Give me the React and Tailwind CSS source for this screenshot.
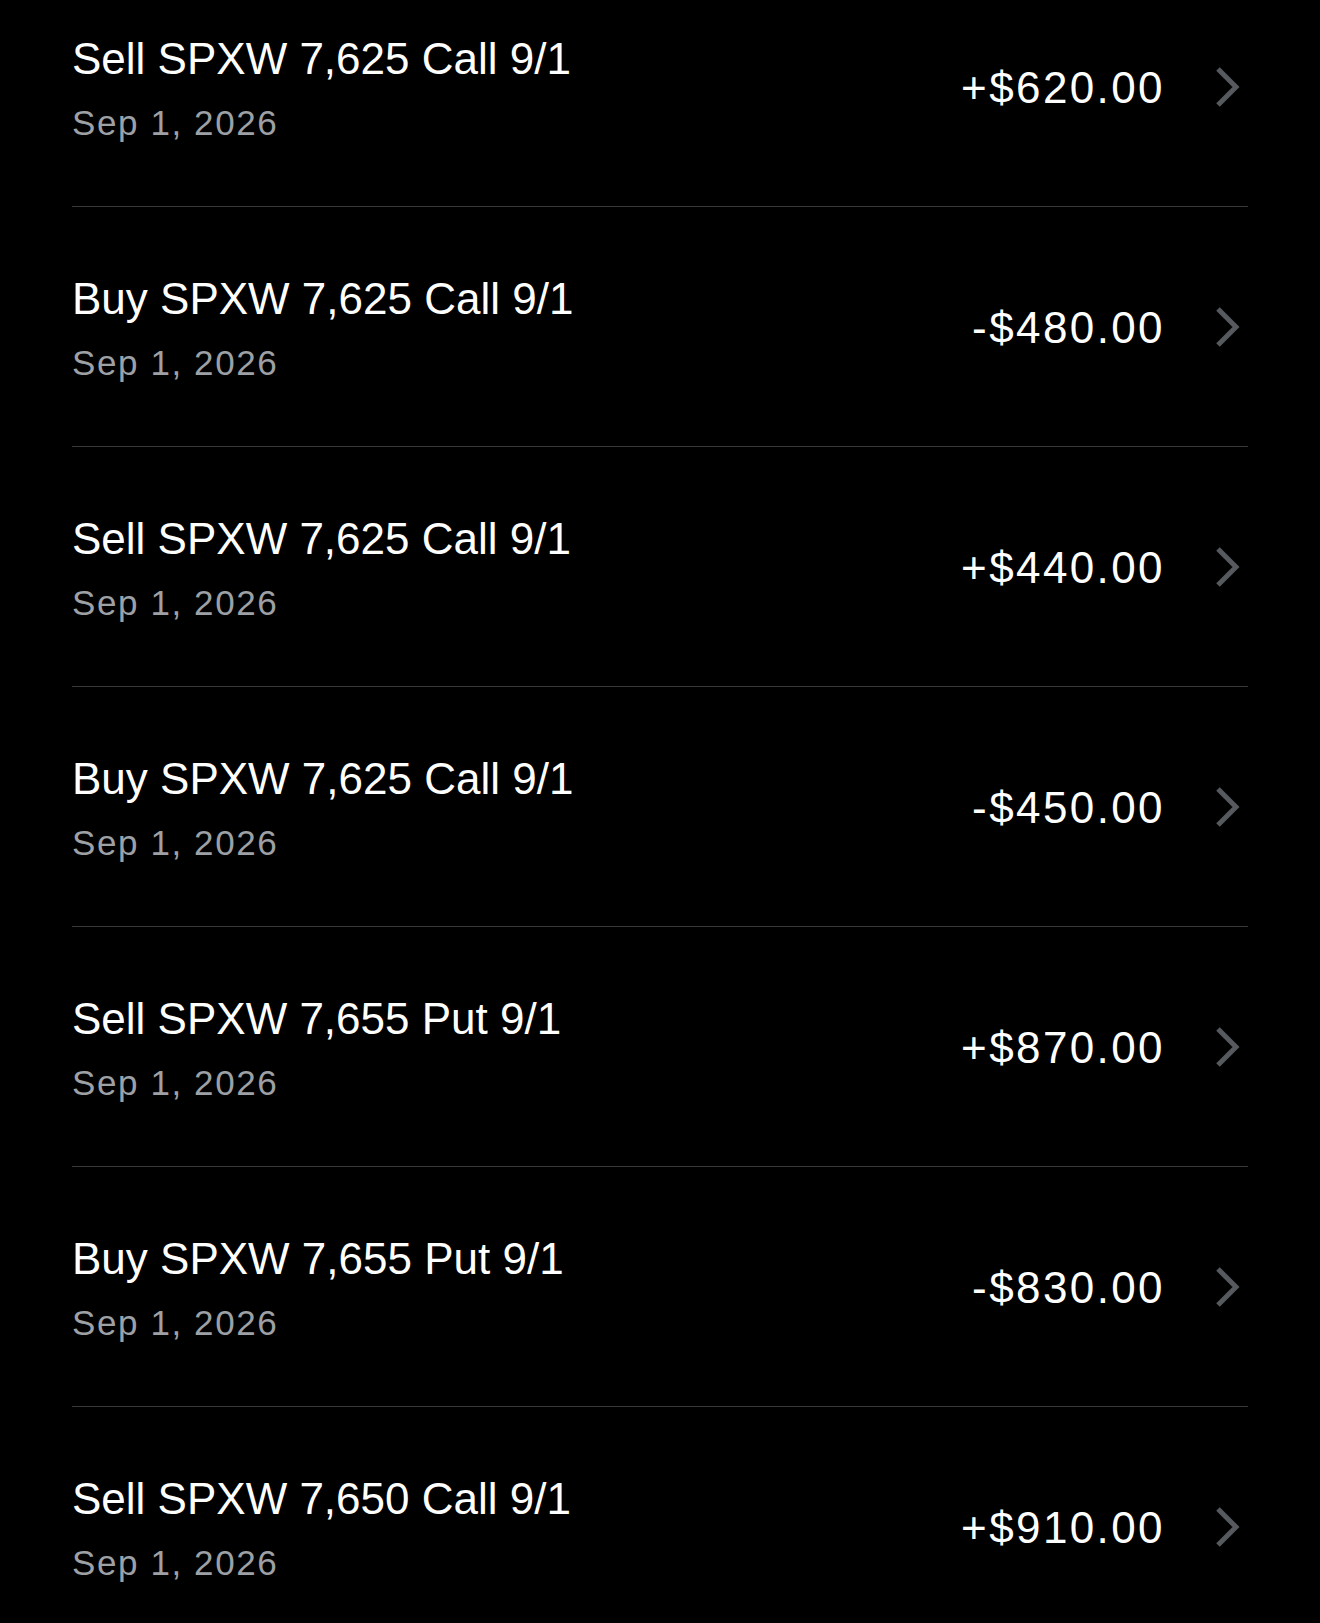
import React from "react";

const trades = [
  { title: "Sell SPXW 7,625 Call 9/1", date: "Sep 1, 2026", amount: "+$620.00" },
  { title: "Buy SPXW 7,625 Call 9/1", date: "Sep 1, 2026", amount: "-$480.00" },
  { title: "Sell SPXW 7,625 Call 9/1", date: "Sep 1, 2026", amount: "+$440.00" },
  { title: "Buy SPXW 7,625 Call 9/1", date: "Sep 1, 2026", amount: "-$450.00" },
  { title: "Sell SPXW 7,655 Put 9/1", date: "Sep 1, 2026", amount: "+$870.00" },
  { title: "Buy SPXW 7,655 Put 9/1", date: "Sep 1, 2026", amount: "-$830.00" },
  { title: "Sell SPXW 7,650 Call 9/1", date: "Sep 1, 2026", amount: "+$910.00" },
];

function Chevron() {
  return (
    <svg width="28" height="44" viewBox="0 0 28 44" fill="none" className="mr-[6px] shrink-0">
      <polyline
        points="4,4 22,22 4,40"
        stroke="#56595d"
        strokeWidth="5"
        strokeLinejoin="miter"
        strokeLinecap="butt"
      />
    </svg>
  );
}

function TradeRow({ trade, first }) {
  return (
    <div
      className={`flex h-[240px] items-center ${
        first ? "border-t border-transparent" : "border-t border-[#38393b]"
      }`}
    >
      <div className="flex flex-col pt-[2px]">
        <span className="text-[44px] leading-[52px] text-white">{trade.title}</span>
        <span className="mt-[18px] text-[35px] leading-[40px] tracking-[1.6px] text-[#9da1a5]">
          {trade.date}
        </span>
      </div>
      <span className="ml-auto pt-[3px] text-[44px] leading-[52px] tracking-[2.4px] text-white">
        {trade.amount}
      </span>
      <div className="ml-[49px] flex items-center">
        <Chevron />
      </div>
    </div>
  );
}

export default function App() {
  return (
    <div
      className="h-[1623px] w-full overflow-hidden bg-black"
      style={{ fontFamily: '"Liberation Sans", Arial, sans-serif' }}
    >
      <div className="-mt-[34px] px-[72px]">
        {trades.map((trade, index) => (
          <TradeRow key={index} trade={trade} first={index === 0} />
        ))}
      </div>
    </div>
  );
}
